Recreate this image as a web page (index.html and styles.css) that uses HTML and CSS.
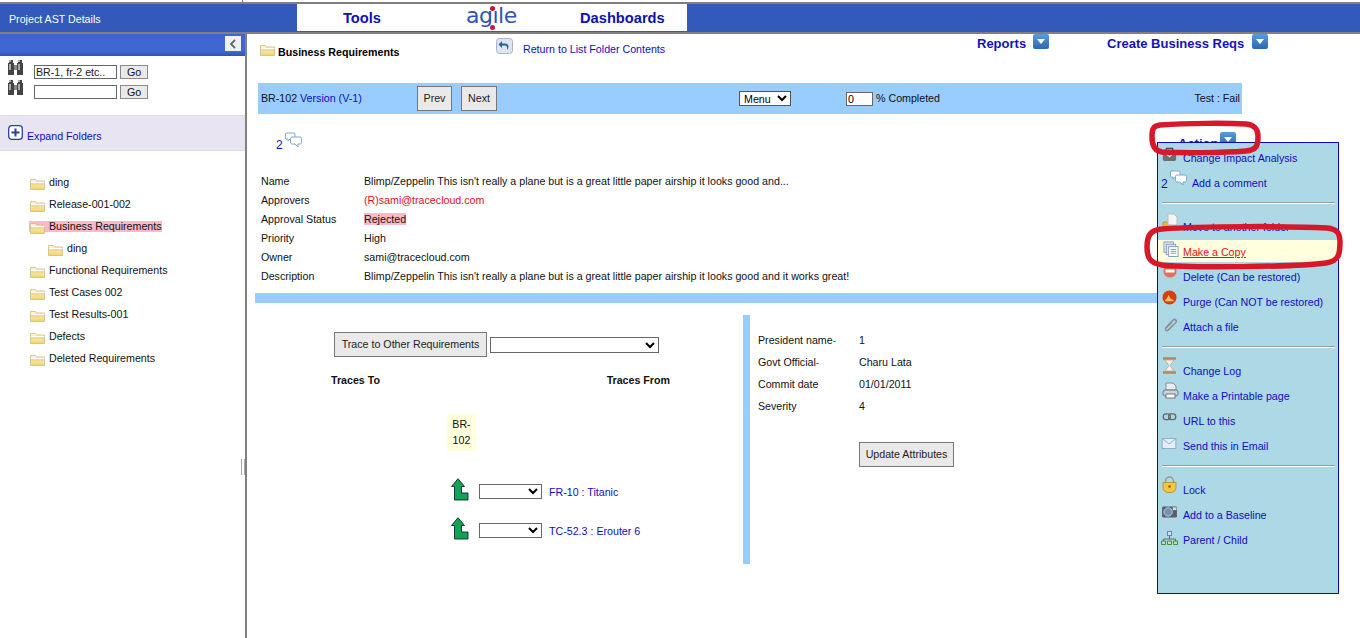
FILE: index.html
```html
<!DOCTYPE html>
<html lang="en">
<head>
<meta charset="utf-8">
<title>Project AST Details</title>
<link rel="stylesheet" href="styles.css">
</head>
<body>
<svg class="defs" width="0" height="0" aria-hidden="true">
  <defs>
    <linearGradient id="fold" x1="0" y1="0" x2="0" y2="1"><stop offset="0" stop-color="#fff8d2"/><stop offset="1" stop-color="#f1d470"/></linearGradient>
    <linearGradient id="btn" x1="0" y1="0" x2="0" y2="1"><stop offset="0" stop-color="#5c9bdc"/><stop offset="1" stop-color="#2c68ac"/></linearGradient>
    <symbol id="folder" viewBox="0 0 15 13">
      <path d="M.5 2.500h5l1 1.500h8v8.500H.5z" fill="url(#fold)" stroke="#cdbb7c" stroke-width=".8"/>
      <path d="M1 5.500h13.500" stroke="#fff" stroke-width="1"/>
      <path d="M1 7h13" stroke="#d5bb5e" stroke-width=".6"/>
    </symbol>
    <symbol id="dd" viewBox="0 0 16 15">
      <rect width="16" height="15" rx="2" fill="url(#btn)"/>
      <path d="M4 5h8l-4 5z" fill="#fff"/>
    </symbol>
    <symbol id="binoc" viewBox="0 0 17 17">
      <path d="M2 1h4v3h1v12H1V4h1zM11 1h4v3h1v12h-6V4h1z" fill="#444"/>
      <path d="M7 6h3v5H7z" fill="#888"/>
      <path d="M2 5h2v6H2zM11 5h2v6h-2zM2 1h2v2H2zM11 1h2v2h-2z" fill="#aaa"/>
    </symbol>
    <symbol id="bubbles" viewBox="0 0 17 16">
      <path d="M1 1h8a1 1 0 0 1 1 1v4a1 1 0 0 1-1 1H5L3 9V7H1a1 1 0 0 1-.5-1V2z" fill="#fff" stroke="#7fa6d6"/>
      <path d="M7 5h8a1.500 1.500 0 0 1 1.500 1.500v4A1.500 1.500 0 0 1 15 12h-2v3l-3-3H7a1.500 1.500 0 0 1-1.500-1.500v-4A1.500 1.500 0 0 1 7 5z" fill="#fff" stroke="#7fa6d6"/>
    </symbol>
    <symbol id="arrow" viewBox="0 0 18 23">
      <path d="M7 .7 13.500 8.500H10.500V15H17V22H3.500V8.500H.5z" fill="#0fa552" stroke="#123" stroke-width=".9"/>
    </symbol>
  </defs>
</svg>

<div class="top-strip"></div>
<header class="head">
  <div class="head-title">Project AST Details</div>
  <nav class="head-tabs">
    <a class="tab tab-tools">Tools</a>
    <span class="logo">agıle<i class="logo-dot logo-dot-top"></i><i class="logo-dot logo-dot-bot"></i></span>
    <a class="tab tab-dash">Dashboards</a>
  </nav>
</header>

<div class="page">
  <aside class="side">
    <div class="side-bar"><button class="collapse" type="button"><svg width="8" height="10" viewBox="0 0 8 10"><path d="M6 1 2 5l4 4" fill="none" stroke="#666" stroke-width="1.800"/></svg></button></div>
    <div class="search">
      <div class="search-row">
        <svg class="binoc" width="17" height="17"><use href="#binoc"/></svg>
        <input class="search-input" type="text" value="BR-1, fr-2 etc..">
        <button class="go" type="button">Go</button>
      </div>
      <div class="search-row">
        <svg class="binoc" width="17" height="17"><use href="#binoc"/></svg>
        <input class="search-input" type="text">
        <button class="go" type="button">Go</button>
      </div>
    </div>
    <div class="expand">
      <svg width="15" height="15" viewBox="0 0 15 15"><rect x=".7" y=".7" width="13.600" height="13.600" rx="3" fill="#fff" stroke="#2a3f9e" stroke-width="1.300"/><path d="M3.500 7.500h8M7.500 3.500v8" stroke="#2a3f9e" stroke-width="2"/></svg>
      <a class="link">Expand Folders</a>
    </div>
    <ul class="tree">
      <li class="node"><svg class="fi" width="15" height="13"><use href="#folder"/></svg><span>ding</span></li>
      <li class="node"><svg class="fi" width="15" height="13"><use href="#folder"/></svg><span>Release-001-002</span></li>
      <li class="node node-on"><span class="node-hl"><svg class="fi" width="15" height="13"><use href="#folder"/></svg><span>Business Requirements</span></span></li>
      <li class="node node-child"><svg class="fi" width="15" height="13"><use href="#folder"/></svg><span>ding</span></li>
      <li class="node"><svg class="fi" width="15" height="13"><use href="#folder"/></svg><span>Functional Requirements</span></li>
      <li class="node"><svg class="fi" width="15" height="13"><use href="#folder"/></svg><span>Test Cases 002</span></li>
      <li class="node"><svg class="fi" width="15" height="13"><use href="#folder"/></svg><span>Test Results-001</span></li>
      <li class="node"><svg class="fi" width="15" height="13"><use href="#folder"/></svg><span>Defects</span></li>
      <li class="node"><svg class="fi" width="15" height="13"><use href="#folder"/></svg><span>Deleted Requirements</span></li>
    </ul>
    <div class="grip"></div>
  </aside>

  <main class="main">
    <div class="crumbs">
      <svg class="crumb-folder" width="15" height="13"><use href="#folder"/></svg>
      <strong class="crumb-title">Business Requirements</strong>
      <svg class="crumb-back" width="17" height="16" viewBox="0 0 17 16"><rect x=".5" y=".5" width="16" height="15" rx="3" fill="#dfe6ee" stroke="#aab4c0"/><path d="M11 12c2.500-2.500 2-6.500-2-6.500H6V3L2.500 6.500 6 10V7.500h3c2 0 2.500 2 2 4.500z" fill="#1f5fb0"/></svg>
      <a class="link crumb-return">Return to List Folder Contents</a>
      <a class="menu-head menu-reports">Reports</a>
      <svg class="dd dd-reports" width="16" height="15"><use href="#dd"/></svg>
      <a class="menu-head menu-create">Create Business Reqs</a>
      <svg class="dd dd-create" width="16" height="15"><use href="#dd"/></svg>
    </div>

    <div class="bar">
      <span class="bar-id">BR-102 <a class="link">Version (V-1)</a></span>
      <button class="btn btn-prev" type="button">Prev</button>
      <button class="btn btn-next" type="button">Next</button>
      <select class="sel-menu"><option>Menu</option></select>
      <input class="pct" type="text" value="0">
      <span class="pct-label">% Completed</span>
      <span class="bar-test">Test : Fail</span>
    </div>

    <div class="comment-row">
      <a class="link comment-count">2</a>
      <svg class="comment-icon" width="17" height="16"><use href="#bubbles"/></svg>
      <a class="actions-label">Actions</a>
      <svg class="dd dd-actions" width="16" height="15"><use href="#dd"/></svg>
    </div>

    <dl class="fields">
      <dt>Name</dt><dd>Blimp/Zeppelin This isn't really a plane but is a great little paper airship it looks good and...</dd>
      <dt>Approvers</dt><dd class="red">(R)sami@tracecloud.com</dd>
      <dt>Approval Status</dt><dd><span class="rejected">Rejected</span></dd>
      <dt>Priority</dt><dd>High</dd>
      <dt>Owner</dt><dd>sami@tracecloud.com</dd>
      <dt>Description</dt><dd>Blimp/Zeppelin This isn't really a plane but is a great little paper airship it looks good and it works great!</dd>
    </dl>

    <div class="divider"></div>

    <div class="lower">
      <section class="traces">
        <div class="trace-top">
          <button class="btn btn-trace" type="button">Trace to Other Requirements</button>
          <select class="sel-trace"><option></option></select>
        </div>
        <div class="trace-heads"><b>Traces To</b><b>Traces From</b></div>
        <div class="chip">BR-<br>102</div>
        <div class="trace-row trace-row-1">
          <svg width="18" height="23"><use href="#arrow"/></svg>
          <select class="sel-small"><option></option></select>
          <a class="link">FR-10 : Titanic</a>
        </div>
        <div class="trace-row trace-row-2">
          <svg width="18" height="23"><use href="#arrow"/></svg>
          <select class="sel-small"><option></option></select>
          <a class="link">TC-52.3 : Erouter 6</a>
        </div>
      </section>
      <div class="vbar"></div>
      <section class="attrs">
        <div class="attr-grid">
          <span>President name<em>-</em></span><span>1</span>
          <span>Govt Official<em>-</em></span><span>Charu Lata</span>
          <span>Commit date</span><span>01/01/2011</span>
          <span>Severity</span><span>4</span>
        </div>
        <button class="btn btn-update" type="button">Update Attributes</button>
      </section>
    </div>
  </main>
</div>

<div class="action-menu">
  <a class="mi"><svg class="ic-impact" width="15" height="15" viewBox="0 0 17 17"><path d="M5 4V1.500h7V4" fill="none" stroke="#444" stroke-width="1.500"/><rect x="1" y="4" width="15" height="12" rx="2" fill="#6e6e6e"/><path d="m5 8 3.500 3L12 8" stroke="#ddd" stroke-width="1.500" fill="none"/></svg><span>Change Impact Analysis</span></a>
  <a class="mi mi-comment"><span class="mi-num">2</span><svg width="17" height="16"><use href="#bubbles"/></svg><span>Add a comment</span></a>
  <hr class="sep">
  <a class="mi"><svg width="17" height="17" viewBox="0 0 17 17"><path d="M1 9h6l1 1h6v6H1z" fill="#e5b93f" stroke="#b58e2c" stroke-width=".7"/><path d="M6 1h6l3 3v8H6z" fill="#f4f4f4" stroke="#bbb"/></svg><span>Move to another folder</span></a>
  <a class="mi mi-on"><svg class="ic-copy" width="16" height="16" viewBox="0 0 17 17"><rect x="1" y="1" width="10" height="11" fill="#dfeaf6" stroke="#7e9cc0"/><rect x="3.500" y="3.500" width="10" height="11" fill="#dfeaf6" stroke="#7e9cc0"/><rect x="6" y="6" width="10" height="10.500" fill="#fff" stroke="#7e9cc0"/><path d="M8 9h6M8 11h6M8 13h6" stroke="#7e9cc0"/></svg><span>Make a Copy</span></a>
  <a class="mi"><svg width="16" height="16" viewBox="0 0 16 16"><circle cx="8" cy="8" r="7" fill="#e2705f" stroke="#c9c4bc"/><rect x="3.500" y="6.500" width="9" height="3" fill="#fff"/></svg><span>Delete (Can be restored)</span></a>
  <a class="mi"><svg class="ic-purge" width="15" height="15" viewBox="0 0 16 16"><circle cx="8" cy="8" r="7.500" fill="#d6400e"/><path d="M3 12c1-2.500 3-3 4-7 1 2 1 3 2 4s3 1 4 3z" fill="#f9c36a"/></svg><span>Purge (Can NOT be restored)</span></a>
  <a class="mi"><svg class="ic-clip" width="15" height="15" viewBox="0 0 15 16"><path d="M2 12 10.500 3a2 2 0 0 1 3 2.500L5 14a1.500 1.500 0 0 1-2.500-2L9 5.500" fill="none" stroke="#8b8f92" stroke-width="1.600"/></svg><span>Attach a file</span></a>
  <hr class="sep">
  <a class="mi"><svg width="15" height="17" viewBox="0 0 15 17"><path d="M1 1.500h13M1 15.500h13" stroke="#b08a5c" stroke-width="2.500"/><path d="M3 3h9L8 8.500l4 5.500H3l4-5.500z" fill="#f2f2ea" stroke="#a9a294" stroke-width=".7"/></svg><span>Change Log</span></a>
  <a class="mi"><svg width="17" height="17" viewBox="0 0 17 17"><path d="M4 1h7l3 3v4H4z" fill="#e8eef6" stroke="#7e8ea2"/><rect x="1" y="8" width="15" height="6" rx="2" fill="#cdd3da" stroke="#70767e"/><rect x="4" y="12" width="9" height="4" fill="#fff" stroke="#70767e"/></svg><span>Make a Printable page</span></a>
  <a class="mi"><svg width="15" height="8" viewBox="0 0 16 9" class="ic-link"><rect x="1" y="1" width="8" height="6.500" rx="3" fill="none" stroke="#666" stroke-width="1.500"/><rect x="7" y="1" width="8" height="6.500" rx="3" fill="none" stroke="#666" stroke-width="1.500"/></svg><span>URL to this</span></a>
  <a class="mi"><svg width="16" height="11" viewBox="0 0 16 12" class="ic-mail"><rect x=".5" y=".5" width="15" height="11" fill="#e3eefa" stroke="#8fa7c6"/><path d="m.5.500 7.500 6 7.500-6" fill="none" stroke="#8fa7c6"/></svg><span>Send this in Email</span></a>
  <hr class="sep">
  <a class="mi"><svg width="15" height="17" viewBox="0 0 15 17"><path d="M3.500 7V5a4 4 0 0 1 8 0v2" fill="none" stroke="#9a9a92" stroke-width="1.500"/><path d="M1 6.500h13v5a5 5 0 0 1-5 5H6a5 5 0 0 1-5-5z" fill="#f4c53e" stroke="#b58a1e" stroke-width=".8"/><circle cx="7.500" cy="10.500" r="1.300" fill="#8a5f0a"/></svg><span>Lock</span></a>
  <a class="mi"><svg width="17" height="13" viewBox="0 0 17 14" class="ic-cam"><rect x=".5" y="1.500" width="16" height="12" rx="1.500" fill="#5a5f66"/><rect x="12" y="2.500" width="4" height="3" fill="#d7dadf"/><circle cx="7" cy="7.500" r="4.500" fill="#6f93bb" stroke="#c9ced5"/></svg><span>Add to a Baseline</span></a>
  <a class="mi"><svg width="17" height="14" viewBox="0 0 17 14" class="ic-tree"><rect x="6.500" y=".5" width="4" height="4" fill="#cfe0f5" stroke="#5f86bd"/><path d="M8.500 5v3M2.500 10V8h12v2" fill="none" stroke="#666"/><path d="M.5 10h4v3.500h-4zM6.500 10h4v3.500h-4zM12.500 10h4v3.500h-4z" fill="#bfe3a8" stroke="#3f8f3a"/></svg><span>Parent / Child</span></a>
</div>

<svg class="ring ring-actions" width="114" height="36" viewBox="0 0 114 36"><path d="M12 5C40 3 80 3 98 4c9 1 12 5 12 13 0 9-2 13-12 14-24 2-64 2-84 1C7 31 4 26 4 17 4 9 5 6 12 5z" fill="none" stroke="#d7182a" stroke-width="5.500"/></svg>
<svg class="ring ring-copy" width="200" height="48" viewBox="0 0 200 48"><path d="M18 6c40-3 130-3 165-1 10 1 13 5 13 14 0 12-1 19-14 21-30 4-140 5-164 2C6 40 3 35 3 24 3 13 6 7 18 6z" fill="none" stroke="#d7182a" stroke-width="5.500"/></svg>
</body>
</html>
```
FILE: styles.css
```css
* { box-sizing: border-box; }
html, body { margin: 0; padding: 0; }
body {
  position: relative;
  width: 1360px;
  height: 638px;
  overflow: hidden;
  background: #fff;
  color: #111;
  font: 10.670px/14px "Liberation Sans", Arial, sans-serif;
}
a { text-decoration: none; }
.defs { position: absolute; }
.link { color: #0d0dc4; }

.top-strip {
  height: 4px;
  border-bottom: 2px solid #7f7f7f;
  background: linear-gradient(#777, #777) 242px 0 / 1px 2px no-repeat;
}
.head {
  display: flex;
  height: 30px;
  padding-bottom: 1px;
  background: #3359bb;
  border-bottom: 2px solid #808080;
}
.head-title { width: 297px; padding: 8px 0 0 9px; color: #fff; font-size: 10.670px; }
.head-tabs {
  display: flex;
  width: 390px;
  background: #fff;
  font-weight: bold;
  font-size: 14.670px;
  color: #0a12b4;
  line-height: 29px;
}
.tab-tools { margin-left: 46px; }
.logo {
  position: relative;
  width: 114px;
  margin-left: 85px;
  font: 400 22px/23px "DejaVu Sans", sans-serif;
  color: #2e53b3;
  letter-spacing: -.5px;
}
.tab-dash { margin-left: 0; }
.logo-dot { position: absolute; width: 5px; height: 5px; border-radius: 50%; background: #c8143c; }
.logo-dot-top { left: 24px; top: 2px; }
.logo-dot-bot { left: 24px; top: 21px; }

.page { display: flex; height: 604px; }
.side {
  position: relative;
  width: 247px;
  flex: none;
  border-right: 2px solid #808080;
}
.side-bar {
  display: flex;
  justify-content: flex-end;
  height: 22px;
  padding: 2px 4px 0 0;
  background: linear-gradient(#3f66cf, #3d67d4 80%, #3052ae);
}
.collapse {
  display: flex;
  align-items: center;
  justify-content: center;
  width: 16px;
  height: 15px;
  padding: 0;
  border: 0;
  background: #eef0f2;
}
.search { padding-top: 3px; height: 59px; }
.search-row { display: flex; align-items: flex-start; height: 20px; padding-left: 7px; }
.binoc { flex: none; }
.search-input {
  width: 83px;
  height: 14px;
  margin: 6px 0 0 10px;
  padding: 0 1px;
  border: 1px solid #666;
  border-radius: 0;
  font: 10.670px "Liberation Sans", sans-serif;
  color: #222;
}
.go {
  width: 28px;
  height: 14px;
  margin: 6px 0 0 3px;
  padding: 0;
  border: 1px solid #8a8a8a;
  background: #e9e9e9;
  font: 10.670px/12px "Liberation Sans", sans-serif;
  color: #111;
}
.expand {
  display: flex;
  align-items: center;
  gap: 4px;
  height: 36px;
  padding-left: 8px;
  background: #e8e4f1;
  border-top: 1px dotted #d6d2e0;
  border-bottom: 1px dotted #d6d2e0;
}
.expand svg { margin-top: -2px; }
.expand .link { margin-top: 5px; }

.tree { list-style: none; margin: 20px 0 0; padding: 0 0 0 30px; }
.node { display: flex; align-items: center; height: 22px; color: #111; white-space: nowrap; }
.node .fi { flex: none; margin: 3px 4px 0 0; }
.node-child { padding-left: 18px; }
.node-hl { display: flex; align-items: center; height: 11px; margin-left: -1px; padding-left: 1px; width: 133px; background: #fdb9c4; }
.grip {
  position: absolute;
  right: 0;
  top: 425px;
  width: 4px;
  height: 16px;
  border-left: 1px solid #a8a8a8;
  border-right: 1px solid #a8a8a8;
}

.main { width: 1113px; flex: none; }
.crumbs { position: relative; display: flex; height: 49px; }
.crumb-folder { margin: 9px 3px 0 13px; flex: none; }
.crumb-title { width: 218px; margin-top: 11px; color: #000; }
.crumb-back { margin: 4px 10px 0 0; flex: none; }
.crumb-return { width: 454px; margin-top: 8px; }
.menu-head { color: #1212bd; font-weight: bold; font-size: 13px; margin-top: 2px; line-height: 15px; }
.menu-reports { width: 56px; }
.dd { flex: none; display: block; }
.dd-reports { margin-right: 58px; }
.menu-create { width: 145px; }

.bar {
  display: flex;
  align-items: center;
  width: 984px;
  height: 31px;
  margin-left: 11px;
  padding-left: 3px;
  background: #99ccff;
}
.bar-id { width: 156px; margin-top: -1px; }
.btn {
  height: 25px;
  padding: 0 0 1px;
  border: 1px solid #777;
  background: #e9e9e9;
  font: 10.670px "Liberation Sans", sans-serif;
  color: #222;
}
.btn-prev { width: 35px; margin-right: 9px; }
.btn-next { width: 36px; margin-right: 242px; }
.sel-menu {
  width: 52px;
  height: 15px;
  margin-right: 55px;
  padding: 0;
  border: 1px solid #555;
  background: #fff;
  font: 10.670px "Liberation Sans", sans-serif;
}
.pct {
  width: 27px;
  height: 14px;
  margin-right: 3px;
  padding: 0 1px;
  border: 1px solid #666;
  font: 10.670px "Liberation Sans", sans-serif;
}
.pct-label { flex: none; margin-top: -1px; }
.bar-test { margin-left: auto; padding-right: 2px; margin-top: -1px; }

.comment-row { position: relative; display: flex; height: 57px; }
.comment-count { margin: 24px 0 0 29px; font-size: 12px; }
.comment-icon { margin: 18px 0 0 2px; }
.actions-label { margin: 23px 0 0 auto; color: #1212bd; font-weight: bold; font-size: 13px; width: 42px; flex: none; }
.dd-actions { margin: 18px 124px 0 0; }

.fields {
  display: grid;
  grid-template-columns: 103px 1fr;
  grid-auto-rows: 19px;
  align-items: center;
  margin: 0 0 0 14px;
  width: 890px;
}
.fields dt, .fields dd { margin: 0; }
.red { color: #e0121c; }
.rejected { background: #fdb9c4; }

.divider { width: 902px; height: 10px; margin: 8px 0 0 8px; background: #99ccff; }

.lower { display: flex; align-items: flex-start; }
.traces { position: relative; width: 496px; height: 261px; padding-top: 29px; }
.trace-top { display: flex; align-items: center; padding-left: 87px; }
.btn-trace { width: 153px; margin-right: 3px; }
.sel-trace { width: 169px; height: 16px; padding: 0; border: 1px solid #666; background: #fff; }
.trace-heads { display: flex; justify-content: space-between; width: 339px; margin: 16px 0 0 84px; }
.trace-heads b { color: #111; }
.chip {
  width: 29px;
  margin: 27px 0 0 200px;
  padding: 3px 0;
  background: #ffffdc;
  line-height: 15.500px;
  text-align: center;
  color: #111;
}
.trace-row { display: flex; align-items: center; padding-left: 204px; }
.trace-row-1 { margin-top: 27px; }
.trace-row-2 { margin-top: 16px; }
.trace-row svg { flex: none; margin-right: 10px; }
.sel-small { width: 63px; height: 15px; margin: 4px 7px 0 0; padding: 0; border: 1px solid #666; background: #fff; }
.trace-row .link { margin-top: 5px; }

.vbar { width: 7px; height: 249px; margin-top: 12px; background: #99ccff; flex: none; }
.attrs { padding: 26px 0 0 8px; }
.attr-grid { display: grid; grid-template-columns: 101px 100px; grid-auto-rows: 22px; align-items: center; color: #111; }
.attr-grid em { color: #c03030; font-style: normal; }
.btn-update { display: block; width: 95px; margin: 25px 0 0 101px; }

.action-menu {
  position: absolute;
  left: 1157px;
  top: 142px;
  width: 182px;
  height: 452px;
  padding-top: 3px;
  background: #add8e6;
  border: 1px solid #0a0ab8;
  color: #0d0dc4;
}
.mi { display: flex; height: 25px; padding-left: 25px; line-height: 25px; position: relative; color: #0d0dc4; }
.mi svg { position: absolute; left: 4px; top: -2px; }
.mi-comment { padding-left: 34px; }
.mi-comment svg { left: 12px; top: -1px; }
.mi-num { position: absolute; left: 3px; top: 1px; font-size: 12px; }
.mi-on { color: #e0121c; background: linear-gradient(#ffffde, #ffffde) 0 -3px / 100% 25px no-repeat; }
.mi-on span { text-decoration: underline; }
.action-menu .sep { display: block; height: 2px; margin: 6px 0 11px 4px; width: 173px; padding: 0; border: 0; border-top: 1px solid #9a9a9a; border-bottom: 1px solid #fff; }
.mi .ic-impact { top: 1px; }
.mi .ic-copy { left: 5px; top: 1px; }
.mi .ic-purge { left: 4px; top: 0; }
.mi .ic-clip { left: 5px; top: 2px; }
.mi .ic-link { left: 4px; top: 4px; }
.mi .ic-mail { left: 3px; top: 4px; }
.mi .ic-cam { left: 3px; top: 2px; }
.mi .ic-tree { left: 3px; top: 3px; }

.ring { position: absolute; }
.ring-actions { left: 1148px; top: 120px; }
.ring-copy { left: 1144px; top: 223px; }
```
